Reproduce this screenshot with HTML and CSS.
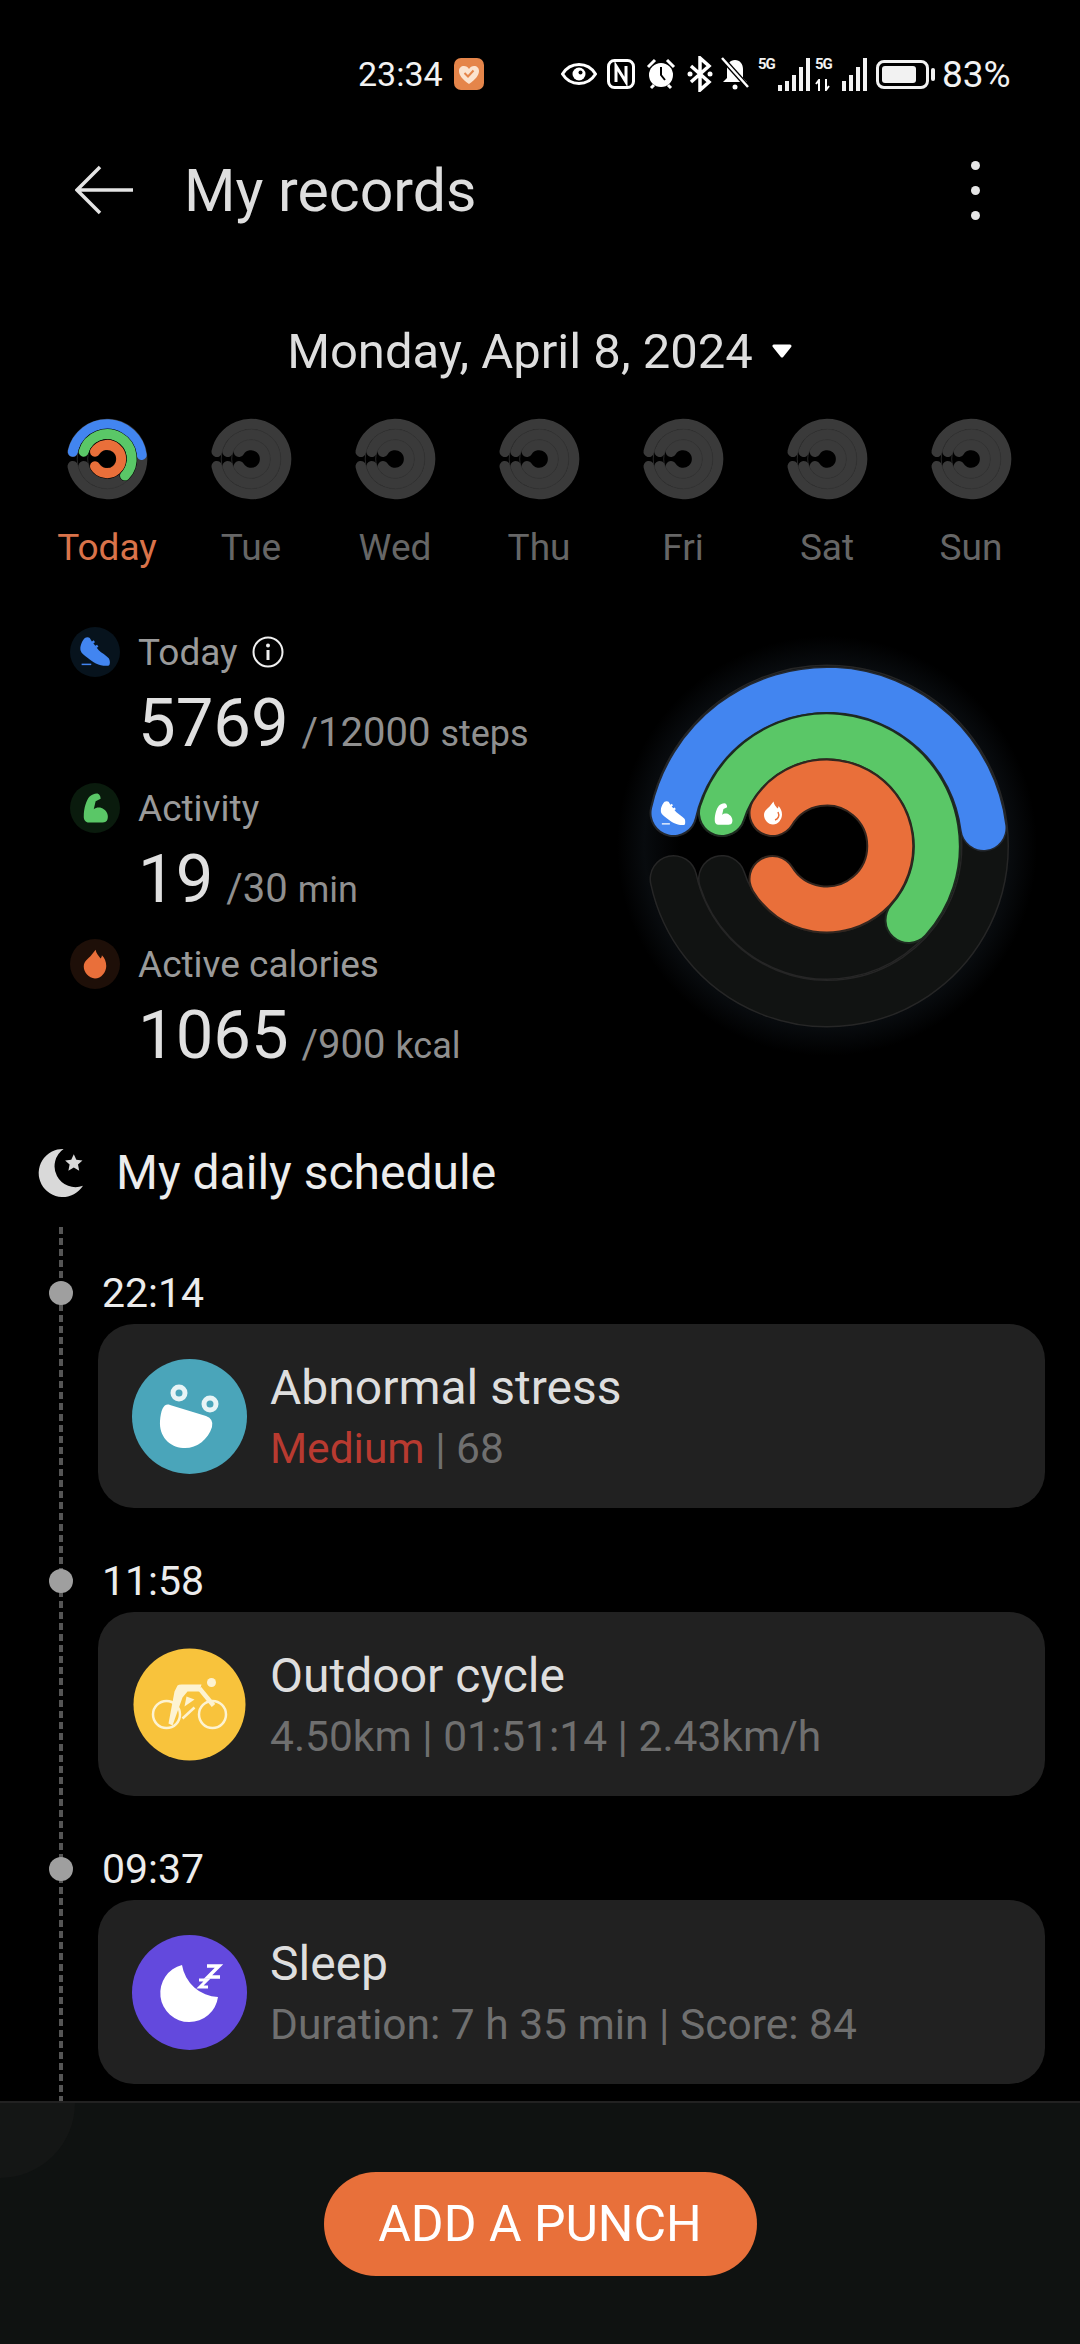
FILE: index.html
```html
<!DOCTYPE html>
<html lang="en">
<head>
    <meta charset="UTF-8">
    <meta name="viewport" content="width=device-width, initial-scale=1.0">
    <title>My records</title>
    <link rel="stylesheet" href="styles.css">
</head>
<body>
    <svg class="defs" width="0" height="0">
        <defs>
            <symbol id="shoe" viewBox="0 0 24 24">
                <path d="M3.900 .8C5 0 7 0 7.800 .8L9.500 3.500 11 2.600 12 4.200 10.700 5 12.200 7 13.700 6.200 14.700 7.800 13.400 8.600 15 10.500C17 12.500 21 14.500 23 17 24 18.500 24.200 21 23.500 22.300 23 23 22 23 21 23 15 23 10 20 6 16.500 3.500 14.500 1 13 .4 10.500-.2 8 1.500 3 3.900 .8z"/>
                <path d="M1.300 21.300h7.700v1.200H1.300z"/>
            </symbol>
            <symbol id="arm" viewBox="0 0 24 24">
                <path d="M13.500 .3C15 .3 16.500 2 16.500 4.500L12.500 6.500 11 13C13 11 17 11 19 13 21.500 14.500 23 18 22 21 21.500 23 20 23.600 18 23.600L7 23.600C4.500 23.600 3 21.500 3 19 3 12 5 6 7.500 3 9 1.300 11.500 .3 13.500 .3z"/>
            </symbol>
            <symbol id="flame" viewBox="0 0 24 24">
                <path d="M12.500 .5c.5 3 2 4.500 4 7 .6-.5 1-1.500 1-2.500 2 2 3.500 5 3.500 8.500C21 18.500 17 23.500 12 23.500S3 18.500 3 14c0-4.500 4-6.500 6-9 1-1.500 2.500-3 3.500-4.500z"/>
            </symbol>
            <symbol id="ring-empty" viewBox="-42 -42 84 84">
                <g fill="none" stroke="#3a3a3a" stroke-width="10.600" stroke-linecap="round">
                    <path d="M-34.200 -7.300A35 35 0 1 1 -34.200 7.300"/>
                    <path d="M-23.300 -7.300A24.500 24.500 0 1 1 -23.300 7.300"/>
                    <path d="M-12 -7.300A14.100 14.100 0 1 1 -12 7.300"/>
                </g>
                <g fill="none" stroke="#333" stroke-width="0.800">
                    <circle r="29.800"/>
                    <circle r="19.300"/>
                </g>
            </symbol>
        </defs>
    </svg>

    <div class="screen">
        <div class="status-bar">
            <span class="clock">23:34</span>
            <svg class="app-badge" viewBox="0 0 30 32">
                <rect width="30" height="32" rx="7" fill="#e5854a"/>
                <path d="M15 26C8 21 5 17 5 13c0-3 2-5 5-5 2 0 4 1 5 3 1-2 3-3 5-3 3 0 5 2 5 5 0 4-3 8-10 13z" fill="#fbe3cf"/>
                <path d="M10.500 15l3.500 3.500 5.500-6" fill="none" stroke="#e5854a" stroke-width="2"/>
            </svg>
            <div class="status-icons">
                <svg class="ic-eye" viewBox="0 0 36 22"><path d="M1.500 11C5.500 4.500 11 1.500 18 1.500S30.500 4.500 34.500 11C30.500 17.500 25 20.500 18 20.500S5.500 17.500 1.500 11z" fill="none" stroke="#fff" stroke-width="3"/><circle cx="18" cy="11" r="6.500" fill="#fff"/><circle cx="19.500" cy="9.500" r="2" fill="#000"/></svg>
                <svg class="ic-nfc" viewBox="0 0 28 32"><rect x="1.500" y="2.500" width="25" height="27" rx="6" fill="none" stroke="#fff" stroke-width="3"/><path d="M9 24V8L19 24V8" fill="none" stroke="#fff" stroke-width="3"/></svg>
                <svg class="ic-alarm" viewBox="0 0 30 32"><circle cx="15" cy="17" r="12" fill="#fff"/><path d="M15 9v8l4 5" fill="none" stroke="#000" stroke-width="2"/><path d="M2 9l7-7M28 9l-7-7M5 30l3-3M25 30l-3-3" stroke="#fff" stroke-width="3"/></svg>
                <svg class="ic-bt" viewBox="0 0 26 36"><path d="M4 10l18 16-9 8V2l9 8L4 26" fill="none" stroke="#fff" stroke-width="3.500"/><circle cx="3" cy="18" r="2.500" fill="#fff"/><circle cx="23" cy="18" r="2.500" fill="#fff"/></svg>
                <svg class="ic-bell" viewBox="0 0 28 34"><path d="M14 3c5 0 8 4 8 9v9l4 4H2l4-4v-9c0-5 3-9 8-9z" fill="#fff"/><circle cx="14" cy="30" r="2.500" fill="#fff"/><path d="M1 1l26 29" stroke="#000" stroke-width="5"/><path d="M1 1l26 29" stroke="#fff" stroke-width="2.500"/></svg>
                <div class="signal">
                    <span class="net">5G</span>
                    <div class="bars"><i class="b1"></i><i class="b2"></i><i class="b3"></i><i class="b4"></i><i class="b5"></i></div>
                </div>
                <div class="signal signal-two">
                    <div class="net-stack">
                        <span class="net">5G</span>
                        <svg class="ic-updown" viewBox="0 0 16 12"><path d="M4 12V1L1 5M11 0v11l3-4" fill="none" stroke="#fff" stroke-width="2"/></svg>
                    </div>
                    <div class="bars"><i class="b2"></i><i class="b3"></i><i class="b4"></i><i class="b5"></i></div>
                </div>
                <div class="battery"><div class="battery-fill"></div></div>
                <div class="battery-tip"></div>
                <span class="battery-pct">83%</span>
            </div>
        </div>

        <div class="top-bar">
            <svg class="back" viewBox="0 0 60 50"><path d="M25 2L2 25l23 23M2 25h56" fill="none" stroke="#e4e4e4" stroke-width="3.500"/></svg>
            <h1 class="page-title">My records</h1>
            <div class="more"><span></span><span></span><span></span></div>
        </div>

        <div class="date-row">
            <span>Monday, April 8, 2024</span>
            <svg class="caret" viewBox="0 0 22 14"><path d="M3 2h16l-8 10z" fill="#fff" stroke="#fff" stroke-width="3" stroke-linejoin="round"/></svg>
        </div>

        <div class="week">
            <div class="day day-active">
                <svg class="day-ring" viewBox="-42 -42 84 84">
                    <use href="#ring-empty" x="-42" y="-42" width="84" height="84"/>
                    <g fill="none" stroke-width="10" stroke-linecap="round">
                        <path stroke="#4285f0" d="M-34.200 -7.300A35 35 0 0 1 34.700 -4"/>
                        <path stroke="#000" stroke-width="11" d="M-23.300 -7.300A24.500 24.500 0 1 1 18 16.500"/>
                        <path stroke="#5ac767" d="M-23.300 -7.300A24.500 24.500 0 1 1 18 16.500"/>
                        <path stroke="#000" stroke-width="11" d="M-12 -7.300A14.100 14.100 0 1 1 -12 7.300"/>
                        <path stroke="#e96f3a" d="M-12 -7.300A14.100 14.100 0 1 1 -12 7.300"/>
                    </g>
                </svg>
                <span>Today</span>
            </div>
            <div class="day"><svg class="day-ring"><use href="#ring-empty"/></svg><span>Tue</span></div>
            <div class="day"><svg class="day-ring"><use href="#ring-empty"/></svg><span>Wed</span></div>
            <div class="day"><svg class="day-ring"><use href="#ring-empty"/></svg><span>Thu</span></div>
            <div class="day"><svg class="day-ring"><use href="#ring-empty"/></svg><span>Fri</span></div>
            <div class="day"><svg class="day-ring"><use href="#ring-empty"/></svg><span>Sat</span></div>
            <div class="day"><svg class="day-ring"><use href="#ring-empty"/></svg><span>Sun</span></div>
        </div>

        <div class="summary">
            <div class="stats">
                <div class="stat">
                    <div class="stat-head">
                        <div class="stat-icon icon-steps"><svg><use href="#shoe"/></svg></div>
                        <span>Today</span>
                        <svg class="info" viewBox="0 0 32 32"><circle cx="16" cy="16" r="14.500" fill="none" stroke="#f0f0f0" stroke-width="2"/><circle cx="16" cy="9.500" r="2" fill="#f0f0f0"/><path d="M16 14v10" stroke="#f0f0f0" stroke-width="3"/></svg>
                    </div>
                    <div class="stat-value"><b>5769</b> <span class="goal">/12000</span> <span class="unit">steps</span></div>
                </div>
                <div class="stat">
                    <div class="stat-head">
                        <div class="stat-icon icon-activity"><svg><use href="#arm"/></svg></div>
                        <span>Activity</span>
                    </div>
                    <div class="stat-value"><b>19</b> <span class="goal">/30</span> <span class="unit">min</span></div>
                </div>
                <div class="stat">
                    <div class="stat-head">
                        <div class="stat-icon icon-calories"><svg><use href="#flame"/></svg></div>
                        <span>Active calories</span>
                    </div>
                    <div class="stat-value"><b>1065</b> <span class="goal">/900</span> <span class="unit">kcal</span></div>
                </div>
            </div>

            <svg class="big-ring" viewBox="-210 -210 420 420">
                <defs>
                    <radialGradient id="glow">
                        <stop offset="0.7" stop-color="#000"/>
                        <stop offset="0.87" stop-color="#080b0e"/>
                        <stop offset="1" stop-color="#000"/>
                    </radialGradient>
                </defs>
                <circle r="210" fill="url(#glow)"/>
                <g fill="none" stroke-linecap="round">
                    <path stroke="#262626" stroke-width="48" d="M-153.500 -33A157.500 157.500 0 1 1 -153.500 33"/>
                    <path stroke="#111312" stroke-width="45" d="M-153.500 -33A157.500 157.500 0 1 1 -153.500 33"/>
                    <path stroke="#262626" stroke-width="48" d="M-105 -33A110 110 0 1 1 -105 33"/>
                    <path stroke="#111312" stroke-width="45" d="M-105 -33A110 110 0 1 1 -105 33"/>
                    <path stroke="#23282f" stroke-width="47" d="M-153.500 -33A157.500 157.500 0 0 1 156.500 -18"/>
                    <path stroke="#4285f0" stroke-width="44" d="M-153.500 -33A157.500 157.500 0 0 1 156.500 -18"/>
                    <path stroke="#1d2b20" stroke-width="48" d="M-105 -33A110 110 0 1 1 81.500 74"/>
                    <path stroke="#5ac767" stroke-width="44" d="M-105 -33A110 110 0 1 1 81.500 74"/>
                    <path stroke="#33261f" stroke-width="48" d="M-54.500 -33A63.500 63.500 0 1 1 -54.500 33"/>
                    <path stroke="#e96f3a" stroke-width="44" d="M-54.500 -33A63.500 63.500 0 1 1 -54.500 33"/>
                </g>
                <g fill="#fff">
                    <use href="#shoe" x="-166.500" y="-45" width="25" height="25"/>
                    <use href="#arm" x="-115" y="-43" width="22" height="22"/>
                    <use href="#flame" x="-66" y="-45" width="24" height="24"/>
                </g>
                <path d="M-52 -26c3-1 5-4 3-8" fill="none" stroke="#e96f3a" stroke-width="1.500"/>
            </svg>
        </div>

        <div class="section-head">
            <svg class="moon" viewBox="0 0 48 48">
                <path d="M28 1A23.500 23.500 0 1 0 47 37 20.500 20.500 0 0 1 28 1z" fill="#d9d9d9"/>
                <path d="M38 6l2.500 5.500 6 .7-4.400 4 1.200 6-5.300-3-5.300 3 1.200-6-4.400-4 6-.7z" fill="#d9d9d9"/>
            </svg>
            <h2>My daily schedule</h2>
        </div>

        <div class="timeline">
            <div class="entry">
                <div class="entry-time"><i class="dot"></i><span>22:14</span></div>
                <div class="card">
                    <svg class="card-icon" viewBox="0 0 115 115">
                        <circle cx="57.500" cy="57.500" r="57.500" fill="#4aa5ba"/>
                        <path d="M38 46L74 57Q82 60 80 68C76 81 64 90 51 89 37 88 27 77 28 62 29 50 32 44 38 46z" fill="#fff"/>
                        <circle cx="47" cy="34" r="6" fill="#4aa5ba" stroke="#e8f4f6" stroke-width="5"/>
                        <circle cx="78" cy="45" r="6" fill="#4aa5ba" stroke="#e8f4f6" stroke-width="5"/>
                    </svg>
                    <div class="card-text">
                        <div class="card-title">Abnormal stress</div>
                        <div class="card-sub"><span class="level">Medium</span> | 68</div>
                    </div>
                </div>
            </div>
            <div class="entry">
                <div class="entry-time"><i class="dot"></i><span>11:58</span></div>
                <div class="card">
                    <svg class="card-icon" viewBox="-1.500 -1.500 115 115">
                        <circle cx="56" cy="56" r="56" fill="#f8c33c"/>
                        <g fill="none" stroke="#fdf3d2" stroke-width="2.500">
                            <circle cx="33" cy="66" r="13.500"/>
                            <circle cx="79" cy="66" r="13.500"/>
                            <path d="M49 70L61 59"/>
                        </g>
                        <circle cx="78" cy="34" r="4.500" fill="#fdf3d2"/>
                        <path d="M44 37Q45 36 48 36L68 36 66 43 54 43 49 49 39 77 35 75 41 43z" fill="#fdf3d2"/>
                        <path d="M66 40L80 57" fill="none" stroke="#fdf3d2" stroke-width="4.500"/>
                        <path d="M51 58L53 48 61 51z" fill="#fdf3d2"/>
                    </svg>
                    <div class="card-text">
                        <div class="card-title">Outdoor cycle</div>
                        <div class="card-sub">4.50km | 01:51:14 | 2.43km/h</div>
                    </div>
                </div>
            </div>
            <div class="entry">
                <div class="entry-time"><i class="dot"></i><span>09:37</span></div>
                <div class="card">
                    <svg class="card-icon" viewBox="0 0 115 115">
                        <circle cx="57.500" cy="57.500" r="57.500" fill="#6349dd"/>
                        <path d="M50 30A29 29 0 1 0 86 62 38 38 0 0 1 50 30z" fill="#fff"/>
                        <path d="M75 31H87L76 42H88" fill="none" stroke="#fff" stroke-width="3.500"/>
                        <path d="M67 45H75L68 52H76" fill="none" stroke="#fff" stroke-width="3"/>
                    </svg>
                    <div class="card-text">
                        <div class="card-title">Sleep</div>
                        <div class="card-sub">Duration: 7 h 35 min | Score: 84</div>
                    </div>
                </div>
            </div>
        </div>

        <div class="footer">
            <button class="punch-button">ADD A PUNCH</button>
        </div>
    </div>
</body>
</html>
```

FILE: styles.css
```css
* {
    box-sizing: border-box;
}
body {
    font-family: Roboto, "Noto Sans", Arial, sans-serif;
    background-color: #000;
    color: #dedede;
    margin: 0;
}
.defs {
    position: absolute;
}
.screen {
    width: 1080px;
    height: 2344px;
    display: flex;
    flex-direction: column;
    overflow: hidden;
}

/* status bar */
.status-bar {
    height: 148px;
    flex: none;
    display: flex;
    align-items: center;
    padding-left: 358px;
    color: #f2f2f2;
}
.clock {
    font-size: 34px;
    width: 96px;
}
.app-badge {
    width: 30px;
    height: 32px;
}
.status-icons {
    display: flex;
    align-items: center;
    margin-left: 77px;
}
.ic-eye { width: 36px; height: 22px; margin-right: 10px; }
.ic-nfc { width: 28px; height: 32px; margin-right: 11px; }
.ic-alarm { width: 30px; height: 32px; margin-right: 11px; }
.ic-bt { width: 26px; height: 36px; margin-right: 8px; }
.ic-bell { width: 28px; height: 34px; margin-right: 9px; }
.signal {
    width: 52px;
    height: 34px;
    display: flex;
    justify-content: space-between;
    align-items: flex-end;
    margin-right: 5px;
}
.net {
    font-size: 15px;
    font-weight: 700;
    line-height: 15px;
    letter-spacing: -1px;
    align-self: flex-start;
}
.net-stack {
    display: flex;
    flex-direction: column;
    justify-content: space-between;
    height: 34px;
}
.ic-updown {
    width: 16px;
    height: 12px;
}
.signal-two {
    margin-right: 9px;
}
.bars {
    display: flex;
    align-items: flex-end;
    gap: 3px;
}
.bars i {
    display: block;
    width: 4px;
    background-color: #f2f2f2;
}
.bars .b1 { height: 6px; }
.bars .b2 { height: 10px; }
.bars .b3 { height: 16px; }
.bars .b4 { height: 24px; }
.bars .b5 { height: 33px; }
.battery {
    width: 53px;
    height: 29px;
    border: 3px solid #f2f2f2;
    border-radius: 8px;
    padding: 3px;
}
.battery-fill {
    height: 100%;
    width: 84%;
    background-color: #f2f2f2;
    border-radius: 3px;
}
.battery-tip {
    width: 4px;
    height: 13px;
    margin-left: 2px;
    background-color: #f2f2f2;
    border-radius: 2px;
}
.battery-pct {
    font-size: 37px;
    margin-left: 7px;
}

/* top bar */
.top-bar {
    height: 84px;
    flex: none;
    display: flex;
    align-items: center;
    padding-left: 75px;
    padding-right: 100px;
}
.back {
    width: 60px;
    height: 50px;
}
.page-title {
    font-size: 59px;
    font-weight: 400;
    margin: 0 0 0 49px;
    flex: 1;
}
.more {
    display: flex;
    flex-direction: column;
    gap: 16px;
}
.more span {
    width: 9px;
    height: 9px;
    border-radius: 50%;
    background-color: #e6e6e6;
}

.date-row {
    height: 64px;
    flex: none;
    margin-top: 87px;
    display: flex;
    align-items: center;
    justify-content: center;
    gap: 18px;
    font-size: 49px;
}
.caret {
    width: 22px;
    height: 14px;
}

/* week strip */
.week {
    margin-top: 36px;
    padding-left: 35px;
    display: grid;
    grid-template-columns: repeat(7, 144px);
    flex: none;
}
.day {
    display: flex;
    flex-direction: column;
    align-items: center;
    gap: 27px;
    font-size: 37px;
    line-height: 44px;
    color: #666;
}
.day-active {
    color: #d9734a;
}
.day-ring {
    width: 84px;
    height: 84px;
    margin: -2px 0;
}

/* steps, activity, calories */
.summary {
    height: 474px;
    flex: none;
    margin-top: 57px;
    display: flex;
    justify-content: space-between;
    padding-left: 70px;
    padding-right: 43px;
}
.stat {
    height: 156px;
}
.stat-head {
    display: flex;
    align-items: center;
    gap: 18px;
    height: 50px;
    font-size: 37px;
    color: #9a9a9a;
}
.stat-icon {
    width: 50px;
    height: 50px;
    border-radius: 50%;
    display: flex;
    align-items: center;
    justify-content: center;
}
.stat-icon svg {
    width: 30px;
    height: 30px;
    fill: currentColor;
}
.icon-steps { background-color: #07131d; color: #4285f0; }
.icon-activity { background-color: #0a1b0d; color: #5ac767; }
.icon-calories { background-color: #1e0f08; color: #e96f3a; }
.info {
    width: 32px;
    height: 32px;
    margin-left: -4px;
}
.stat-value {
    margin: 7px 0 0 68px;
    line-height: 78px;
    white-space: nowrap;
    color: #8f8f8f;
    font-size: 40px;
}
.stat-value b {
    font-size: 67px;
    font-weight: 400;
    color: #e0e0e0;
    margin-right: 3px;
}
.unit {
    font-size: 36px;
}
.big-ring {
    width: 420px;
    height: 420px;
    margin-top: 9px;
}

/* schedule */
.section-head {
    height: 60px;
    flex: none;
    margin-top: 41px;
    display: flex;
    align-items: center;
    padding-left: 35px;
    gap: 32px;
}
.moon {
    width: 49px;
    height: 49px;
}
.section-head h2 {
    margin: 0;
    font-size: 48px;
    font-weight: 400;
    color: #ececec;
}
.timeline {
    position: relative;
    flex: none;
    height: 874px;
    margin-top: 25px;
    padding: 35px 35px 0 98px;
    display: flex;
    flex-direction: column;
    gap: 42px;
}
.timeline::before {
    content: "";
    position: absolute;
    left: 59px;
    top: 0;
    bottom: 0;
    width: 4px;
    background-image: repeating-linear-gradient(#555 0 7px, transparent 7px 11px);
}
.entry-time {
    position: relative;
    height: 62px;
    display: flex;
    align-items: center;
    padding-left: 4px;
    font-size: 41px;
    color: #ececec;
}
.dot {
    position: absolute;
    left: -49px;
    width: 24px;
    height: 24px;
    border-radius: 50%;
    background-color: #9f9f9f;
}
.card {
    height: 184px;
    background-color: #212121;
    border-radius: 36px;
    display: flex;
    align-items: center;
    padding-left: 34px;
    gap: 23px;
}
.card-icon {
    width: 115px;
    height: 115px;
    flex: none;
}
.card-title {
    font-size: 48px;
    line-height: 60px;
    color: #dedede;
}
.card-sub {
    margin-top: 6px;
    font-size: 42.500px;
    line-height: 50px;
    color: #6f6f6f;
}
.level {
    color: #b83a30;
}

/* bottom action */
.footer {
    position: relative;
    flex: 1;
    background-color: #0f1211;
    border-top: 2px solid #222;
    display: flex;
    justify-content: center;
    padding-top: 69px;
    overflow: hidden;
}
.footer::before {
    content: "";
    position: absolute;
    left: -75px;
    top: -75px;
    width: 150px;
    height: 150px;
    border-radius: 50%;
    background-color: #141615;
}
.punch-button {
    width: 433px;
    height: 104px;
    border: none;
    border-radius: 52px;
    background-color: #e8703a;
    color: #fff;
    font-family: inherit;
    font-size: 50px;
}
```
